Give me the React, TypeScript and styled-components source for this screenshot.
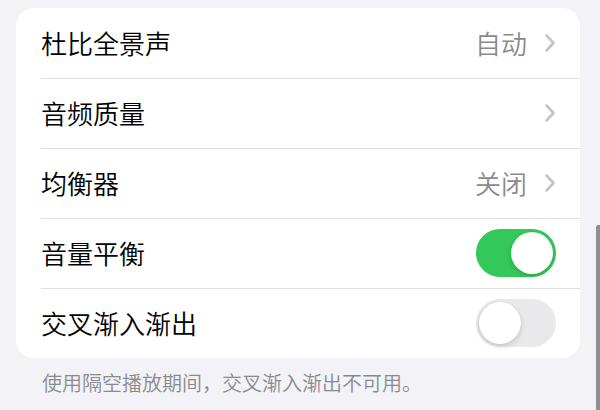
import styled, { createGlobalStyle } from 'styled-components';

const GlobalStyle = createGlobalStyle`
    html, body {
        margin: 0;
        padding: 0;
        background-color: #f2f2f7;
        font-family: "Noto Sans CJK SC", "Noto Sans", sans-serif;
        overflow: hidden;
    }
`;

const Page = styled.div`
    position: relative;
    width: 600px;
    height: 410px;
    padding: 8px 20px 0 16px;
    box-sizing: border-box;
`;

const Card = styled.div`
    background-color: #ffffff;
    border-radius: 18px;
    overflow: hidden;
`;

const Row = styled.div`
    display: flex;
    align-items: center;
    height: 70px;
    padding-left: 25px;
`;

const RowInner = styled.div<{ last?: boolean }>`
    flex: 1;
    height: 100%;
    display: flex;
    align-items: center;
    justify-content: space-between;
    padding-right: 24px;
    border-bottom: ${(props) => (props.last ? 'none' : '1px solid #e0e0e4')};
`;

const Label = styled.span`
    font-size: 26px;
    font-weight: 350;
    color: #000000;
    line-height: 1;
`;

const Accessory = styled.div`
    display: flex;
    align-items: center;
    gap: 17px;
`;

const Value = styled.span`
    font-size: 26px;
    font-weight: 350;
    color: #8a8a8e;
    line-height: 1;
`;

const Toggle = styled.div<{ on: boolean }>`
    position: relative;
    width: 80px;
    height: 48px;
    border-radius: 24px;
    background-color: ${(props) => (props.on ? '#34c759' : '#e9e9eb')};
    flex-shrink: 0;
`;

const Knob = styled.div<{ on: boolean }>`
    position: absolute;
    top: 3px;
    left: ${(props) => (props.on ? '35px' : '3px')};
    width: 42px;
    height: 42px;
    border-radius: 50%;
    background-color: #ffffff;
    box-shadow: 0 2px 5px rgba(0, 0, 0, 0.16), 0 0 1px rgba(0, 0, 0, 0.1);
`;

const Footer = styled.p`
    margin: 12px 0 0 26px;
    font-size: 20px;
    font-weight: 350;
    color: #8a8a8e;
    line-height: 26px;
`;

const ScrollBar = styled.div`
    position: absolute;
    right: 0;
    top: 225px;
    width: 4px;
    height: 190px;
    border-radius: 2px 0 0 2px;
    background-color: #8e8e93;
`;

const Chevron = () => (
    <svg width="12" height="20" viewBox="0 0 12 20">
        <path d="M2.5 2.5 L9.5 10 L2.5 17.5" fill="none" stroke="#c4c4c7" strokeWidth="2.6" strokeLinecap="round" strokeLinejoin="round" />
    </svg>
);

interface Item {
    label: string;
    value?: string;
    kind: 'link' | 'toggle';
    on?: boolean;
}

const items: Item[] = [
    { label: '杜比全景声', value: '自动', kind: 'link' },
    { label: '音频质量', kind: 'link' },
    { label: '均衡器', value: '关闭', kind: 'link' },
    { label: '音量平衡', kind: 'toggle', on: true },
    { label: '交叉渐入渐出', kind: 'toggle', on: false },
];

export default function App() {
    return (
        <>
            <GlobalStyle />
            <Page>
                <Card>
                    {items.map((item, i) => (
                        <Row key={item.label}>
                            <RowInner last={i === items.length - 1}>
                                <Label>{item.label}</Label>
                                {item.kind === 'link' ? (
                                    <Accessory>
                                        {item.value && <Value>{item.value}</Value>}
                                        <Chevron />
                                    </Accessory>
                                ) : (
                                    <Toggle on={!!item.on}>
                                        <Knob on={!!item.on} />
                                    </Toggle>
                                )}
                            </RowInner>
                        </Row>
                    ))}
                </Card>
                <Footer>使用隔空播放期间，交叉渐入渐出不可用。</Footer>
                <ScrollBar />
            </Page>
        </>
    );
}
